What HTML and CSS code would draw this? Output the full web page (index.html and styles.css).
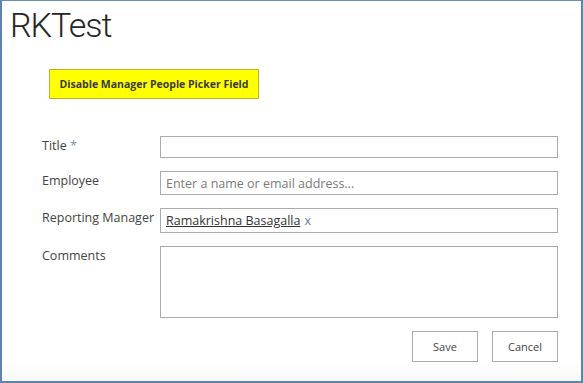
FILE: index.html
```html
<!DOCTYPE html>
<html>
<head>
<meta charset="utf-8">
<link rel="stylesheet" href="styles.css">
</head>
<body>
<div class="frame">
  <h1 class="page-title">RKTest</h1>
  <div class="action-row">
    <button class="yellow-btn" type="button">Disable Manager People Picker Field</button>
  </div>
  <div class="form">
    <div class="label">Title <span class="req">*</span></div>
    <div class="field"><div class="input h22"></div></div>

    <div class="label">Employee</div>
    <div class="field"><div class="input h24"><span class="placeholder">Enter a name or email address...</span></div></div>

    <div class="label">Reporting Manager</div>
    <div class="field"><div class="input h25"><span class="person">Ramakrishna Basagalla</span><span class="remove">x</span></div></div>

    <div class="label">Comments</div>
    <div class="field"><div class="input h72"></div></div>
  </div>
  <div class="buttons">
    <button class="btn" type="button">Save</button>
    <button class="btn" type="button">Cancel</button>
  </div>
</div>
</body>
</html>
```

FILE: styles.css
```css
html, body {
  margin: 0;
  padding: 0;
  background: #ffffff;
}
.frame {
  box-sizing: border-box;
  width: 583px;
  height: 383px;
  border-top: 1px solid #6d8db0;
  border-left: 2px solid #5f83aa;
  border-right: 2px solid #5f83aa;
  border-bottom: 2px solid #5f83aa;
  background: linear-gradient(to bottom, #ffffff 0, #ffffff 360px, #f7f8f9 378px);
  font-family: "Open Sans", "Noto Sans", sans-serif;
  color: #444444;
  padding: 0 23px 0 9px;
}
.page-title {
  margin: 0 0 0 -1px;
  padding-top: 1px;
  font-family: "Roboto", "Open Sans", sans-serif;
  font-weight: 300;
  font-size: 34px;
  line-height: 46px;
  letter-spacing: -1px;
  color: #262626;
}
.action-row {
  display: flex;
  padding: 21px 0 0 38px;
}
.yellow-btn {
  box-sizing: border-box;
  width: 210px;
  height: 30px;
  background: #ffff00;
  border: 1px solid #b8b430;
  font-family: "Open Sans", "Noto Sans", sans-serif;
  font-weight: 700;
  font-size: 10.5px;
  color: #3a3a3a;
  padding: 0;
  margin: 0;
}
.form {
  display: grid;
  grid-template-columns: 118px 398px;
  row-gap: 13px;
  margin-top: 37px;
  padding-left: 31px;
}
.label {
  font-size: 12.5px;
  line-height: 18px;
  padding-top: 1px;
  color: #444444;
  white-space: nowrap;
}
.req {
  color: #6f90b8;
}
.input {
  box-sizing: border-box;
  border: 1px solid #ababab;
  background: #ffffff;
  display: flex;
  align-items: center;
  padding: 0 5px;
  font-size: 12.5px;
}
.h22 { height: 22px; }
.h24 { height: 24px; }
.h25 { height: 25px; }
.h72 { height: 72px; }
.placeholder {
  color: #7a7a7a;
}
.person {
  color: #333333;
  text-decoration: underline;
}
.remove {
  color: #5b7fa8;
  margin-left: 4px;
}
.buttons {
  display: flex;
  justify-content: flex-end;
  gap: 14px;
  margin-top: 13px;
}
.btn {
  box-sizing: border-box;
  width: 66px;
  height: 31px;
  background: #ffffff;
  border: 1px solid #ababab;
  font-family: "Open Sans", "Noto Sans", sans-serif;
  font-size: 11px;
  color: #444444;
  padding: 0;
  margin: 0;
}
```
